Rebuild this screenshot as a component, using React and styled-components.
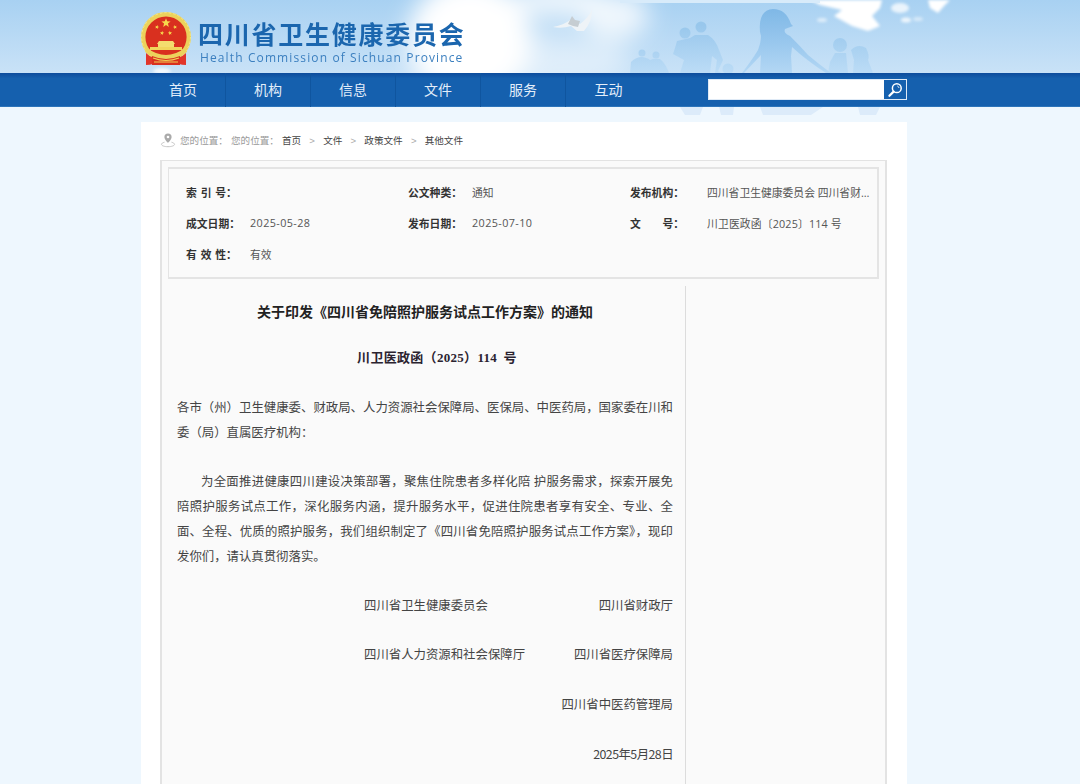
import React from 'react';
import styled, { createGlobalStyle } from 'styled-components';

const GlobalStyle = createGlobalStyle`
  html, body { margin: 0; padding: 0; background: #eef7fe; }
  body { font-family: "Noto Sans CJK SC", "Noto Sans", sans-serif; color: #333; }
`;

const Page = styled.div`
  width: 1080px;
  height: 784px;
  overflow: hidden;
  background: #eef7fe;
`;

const Hero = styled.header`
  position: relative;
  height: 73px;
  background: linear-gradient(180deg, #a8d1f2 0%, #c9e2f7 100%);
`;

const HeroArt = styled.svg`
  position: absolute;
  left: 0;
  top: 0;
`;

const Brand = styled.div`
  position: relative;
  display: flex;
  align-items: flex-start;
  gap: 5px;
  padding: 12px 0 0 141px;
`;

const BrandText = styled.div`
  display: flex;
  flex-direction: column;
  padding-top: 5px;
`;

const BrandName = styled.div`
  font-size: 25px;
  font-weight: 700;
  line-height: 32px;
  letter-spacing: 1.75px;
  color: #1b66ae;
  white-space: nowrap;
`;

const BrandEn = styled.div`
  font-family: "Open Sans", sans-serif;
  font-size: 12px;
  line-height: 14px;
  margin: 2px 0 0 2px;
  letter-spacing: 1.12px;
  color: #3b7fbf;
  white-space: nowrap;
`;

const NavBar = styled.nav`
  position: relative;
  display: flex;
  align-items: center;
  height: 34px;
  padding-left: 141px;
  box-sizing: border-box;
  background: linear-gradient(180deg, #0d4c9c 0%, #1560ae 16%, #1560ae 96%, #3a80c2 100%);
`;

const NavItem = styled.a`
  display: flex;
  align-items: center;
  justify-content: center;
  width: 85px;
  height: 34px;
  padding-bottom: 2px;
  box-sizing: border-box;
  font-size: 14px;
  color: #e3eefa;
  border-right: ${(p) => (p.$last ? 'none' : '1px solid #0f559f')};
`;

const SearchBox = styled.form`
  display: flex;
  width: 199px;
  height: 21px;
  margin: 0 0 1px 57px;
  box-sizing: border-box;
  background: #fff;
  border: 1px solid #dfeaf6;
`;

const SearchInput = styled.input`
  flex: 1;
  min-width: 0;
  border: 0;
  outline: 0;
  padding: 0 4px;
  background: #fff;
`;

const SearchButton = styled.button`
  display: flex;
  align-items: center;
  justify-content: center;
  width: 22px;
  height: 19px;
  padding: 0;
  border: 0;
  background: #1560ae;
`;

const Panel = styled.main`
  position: relative;
  width: 766px;
  margin: 15px 0 0 141px;
  padding: 0 20px 0 19px;
  box-sizing: border-box;
  background: #fff;
`;

const Crumbs = styled.div`
  display: flex;
  align-items: center;
  height: 36px;
  padding-bottom: 2px;
  font-size: 9.6px;
  white-space: nowrap;
`;

const PinIcon = styled.svg`
  margin-right: 4px;
  flex: none;
`;

const CrumbMuted = styled.span`
  color: #999;
  margin-right: 3px;
`;

const CrumbLink = styled.a`
  color: #444;
`;

const CrumbSep = styled.span`
  width: 22px;
  text-align: center;
  color: #aaa;
  font-family: "Liberation Sans", sans-serif;
`;

const Box = styled.section`
  padding: 6px 6px 0;
  background: #fafafa;
  border: 1px solid #e3e3e3;
  border-width: 1px 2px 0;
`;

const MetaBox = styled.div`
  display: grid;
  grid-template-columns: 222px 222px 1fr;
  grid-auto-rows: 31px;
  height: 112px;
  padding: 7px 5px 0 17px;
  box-sizing: border-box;
  border: 2px solid #e4e4e4;
  border-left-width: 1px;
`;

const MetaCell = styled.div`
  display: flex;
  align-items: center;
  min-width: 0;
  font-size: 10.8px;
`;

const MetaLabel = styled.b`
  flex: none;
  width: ${(p) => p.$w}px;
  font-weight: 700;
  word-spacing: 1.4px;
  color: #333;
  white-space: pre;
`;

const MetaValue = styled.span`
  min-width: 0;
  overflow: hidden;
  font-family: "Open Sans", "Noto Sans CJK SC", sans-serif;
  text-overflow: ellipsis;
  white-space: nowrap;
  color: #555;
  letter-spacing: ${(p) => p.$spacing || 0}px;
`;

const Columns = styled.div`
  display: flex;
  margin: 7px 0 0 -7px;
`;

const Article = styled.article`
  width: 525px;
  height: 520px;
  padding: 0 12px 0 16px;
  box-sizing: border-box;
  border-right: 1px solid #dcdcdc;
`;

const Title = styled.h1`
  margin: 0;
  height: 52px;
  font-size: 14px;
  line-height: 50px;
  font-weight: 700;
  text-align: center;
  color: #222;
  white-space: nowrap;
`;

const DocNo = styled.h2`
  margin: 0 0 16.5px;
  height: 40px;
  padding-left: 24px;
  font-family: "Liberation Serif", "Noto Sans CJK SC", serif;
  font-size: 13px;
  line-height: 40px;
  font-weight: 700;
  text-align: center;
  color: #2b2330;
  letter-spacing: 0.3px;
  word-spacing: 3px;
  white-space: pre;
`;

const Para = styled.p`
  margin: 0 0 ${(p) => (p.$indent ? '23.5px' : '24.5px')};
  font-size: 12.4px;
  line-height: 25px;
  text-align: justify;
  color: #444;
  text-indent: ${(p) => (p.$indent ? '24px' : '0')};
`;

const SignRow = styled.div`
  display: flex;
  justify-content: ${(p) => (p.$pair ? 'space-between' : 'flex-end')};
  margin: 0 0 24.8px;
  padding-left: ${(p) => (p.$pair ? '187px' : '0')};
  font-size: 12.4px;
  line-height: 25px;
  color: #444;
  white-space: nowrap;
  letter-spacing: ${(p) => (p.$tight ? '-0.55px' : '0')};
`;

const navItems = ['首页', '机构', '信息', '文件', '服务', '互动'];

const meta = [
  { label: '索 引 号：', w: 64, value: '' },
  { label: '公文种类：', w: 64, value: '通知' },
  { label: '发布机构：', w: 77, value: '四川省卫生健康委员会 四川省财政厅' },
  { label: '成文日期：', w: 64, value: '2025-05-28', spacing: 0.4 },
  { label: '发布日期：', w: 64, value: '2025-07-10', spacing: 0.4 },
  { label: '文　　号：', w: 77, value: '川卫医政函〔2025〕114 号', spacing: 0.15 },
  { label: '有 效 性：', w: 64, value: '有效' },
];

const star = (cx, cy, r, rot = 0) => {
  const pts = [];
  for (let i = 0; i < 10; i += 1) {
    const a = (Math.PI / 5) * i - Math.PI / 2 + rot;
    const d = i % 2 ? r * 0.42 : r;
    pts.push(`${(cx + d * Math.cos(a)).toFixed(2)},${(cy + d * Math.sin(a)).toFixed(2)}`);
  }
  return pts.join(' ');
};

const Scenery = () => (
  <HeroArt width="1080" height="122" viewBox="0 0 1080 122" aria-hidden="true">
    <defs>
      <filter id="soft" x="-40%" y="-40%" width="180%" height="180%">
        <feGaussianBlur stdDeviation="12" />
      </filter>
      <filter id="soft2" x="-30%" y="-30%" width="160%" height="160%">
        <feGaussianBlur stdDeviation="1.8" />
      </filter>
      <filter id="edge" x="-10%" y="-10%" width="120%" height="120%">
        <feGaussianBlur stdDeviation="0.6" />
      </filter>
      <linearGradient id="figure" gradientUnits="userSpaceOnUse" x1="0" y1="9" x2="0" y2="73">
        <stop offset="0" stopColor="#7fb8e6" />
        <stop offset="0.55" stopColor="#9ac8ee" />
        <stop offset="1" stopColor="#b3d7f4" />
      </linearGradient>
      <linearGradient id="side" gradientUnits="userSpaceOnUse" x1="0" y1="25" x2="0" y2="73">
        <stop offset="0" stopColor="#98c7ec" />
        <stop offset="1" stopColor="#bcdcf6" />
      </linearGradient>
      <clipPath id="sky"><rect width="1080" height="73" /></clipPath>
    </defs>
    <g clipPath="url(#sky)">
      <g filter="url(#soft)" fill="#fff">
        <ellipse cx="470" cy="40" rx="62" ry="62" />
        <ellipse cx="550" cy="60" rx="80" ry="26" opacity="0.45" />
        <ellipse cx="560" cy="0" rx="46" ry="18" opacity="0.8" />
        <ellipse cx="615" cy="16" rx="34" ry="24" opacity="0.8" />
      </g>
      <g filter="url(#soft2)" fill="#fff">
        <ellipse cx="162" cy="71" rx="9" ry="3" opacity="0.8" />
        <path d="M810 0 L882 0 L880 8 L872 16 L880 26 L868 31 L852 26 L834 16 L842 10 L820 5Z" />
        <ellipse cx="900" cy="8" rx="9" ry="5" opacity="0.75" />
        <ellipse cx="906" cy="20" rx="5" ry="2.5" opacity="0.8" />
        <ellipse cx="918" cy="19" rx="5" ry="2" opacity="0.5" />
        <ellipse cx="822" cy="20" rx="5" ry="2" opacity="0.6" />
        <path d="M928 0 L950 0 L944 6 L938 13 L930 8Z" />
      </g>
      <rect x="620" y="0" width="200" height="3" fill="#d8ebfa" />
      <g filter="url(#edge)">
        <path d="M553 27 Q564 25 570 20 L580 24 Q588 18 592 10 Q592 22 584 31 L577 31 L571 26 Q562 29 553 27Z" fill="#eef3f7" />
        <path d="M568 24 L572 16 L575 20 L580 21 L578 27 L573 26Z" fill="#c6cdd2" />
      </g>
      <g fill="url(#side)" filter="url(#edge)">
        <circle cx="642" cy="53" r="3.5" />
        <circle cx="656" cy="55" r="3.5" />
        <path d="M630 73 L631 62 Q636 57 642 57 Q648 58 650 60 Q654 58 660 59 Q666 64 669 73Z" />
        <circle cx="840" cy="45" r="7" />
        <path d="M828 73 L830 62 L835 53 L846 53 L848 73Z" />
        <path d="M851 50 Q858 43 866 48 Q870 56 868 60 L873 73 L853 73 L854 60 Z" />
        <circle cx="685" cy="33" r="5.5" />
        <circle cx="701" cy="27" r="5.5" />
        <path d="M677 41 L690 38 L695 35 L708 35 Q716 40 719 50 L723 60 L718 71 L721 73 L715 73 L717 60 L712 56 L710 73 L680 73 L684 60 L673 54 L675 48Z" />
        <circle cx="728" cy="69" r="5.5" />
      </g>
      <path
        filter="url(#edge)"
        fill="url(#figure)"
        d="M760 32 Q758 10 773 9 Q786 9 791 24 L793 26 L785 29 Q783 33 790 36 Q800 46 808 55 Q820 65 831 73 L826 73 Q806 60 792 47 L791 56 L792 73 L760 73 L761 55 L744 73 L742 73 Q752 60 758 50 Q761 42 761 36Z"
      />
    </g>
    <g fill="#dcebfa">
      <path d="M680 107h23l-3 8h-15z" />
      <path d="M719 107h15l-1 8h-12z" />
      <path d="M760 107h63l-12 8h-48z" />
      <path d="M858 107h22l-4 8h-16z" />
    </g>
  </HeroArt>
);

const Emblem = () => (
  <svg width="52" height="56" viewBox="0 0 52 56" aria-hidden="true">
    <circle cx="25" cy="25" r="22.8" fill="#d9301f" stroke="#ecd25c" strokeWidth="4.4" />
    <circle cx="25" cy="25" r="24.4" fill="none" stroke="#f6e888" strokeWidth="1" strokeDasharray="2.5 2" />
    <polygon points={star(25, 11, 4.8)} fill="#f7d94c" />
    <polygon points={star(16, 15, 2.2, 0.3)} fill="#f7d94c" />
    <polygon points={star(21, 21, 2.2, 0.15)} fill="#f7d94c" />
    <polygon points={star(29, 21, 2.2, -0.15)} fill="#f7d94c" />
    <polygon points={star(34, 15, 2.2, -0.3)} fill="#f7d94c" />
    <path d="M18 29 L32 29 L34 32 L16 32Z" fill="#f4dd6e" />
    <rect x="17" y="32" width="16" height="3" fill="#f4dd6e" />
    <path d="M9 35h32v3H9z" fill="#f1d55c" />
    <path d="M6 36 Q25 50 44 36 L46 40 Q25 55 4 40Z" fill="#ecd25c" />
    <path d="M5 41 Q8 44 11 45 L12 52 Q9 53 5 53Z" fill="#e2352a" />
    <path d="M45 41 Q42 44 39 45 L38 52 Q41 53 45 53Z" fill="#e2352a" />
    <path d="M11 44 Q25 50 39 44 L39 53 L11 53Z" fill="#d9301f" />
    <path d="M12 46 Q25 51 38 46 M13 50 H37" stroke="#f1cf55" strokeWidth="1.2" fill="none" />
  </svg>
);

const App = () => (
  <>
    <GlobalStyle />
    <Page>
      <Hero>
        <Scenery />
        <Brand>
          <Emblem />
          <BrandText>
            <BrandName>四川省卫生健康委员会</BrandName>
            <BrandEn>Health Commission of Sichuan Province</BrandEn>
          </BrandText>
        </Brand>
      </Hero>
      <NavBar>
        {navItems.map((item, i) => (
          <NavItem key={item} $last={i === navItems.length - 1}>{item}</NavItem>
        ))}
        <SearchBox onSubmit={(e) => e.preventDefault()}>
          <SearchInput />
          <SearchButton type="button" aria-label="搜索">
            <svg width="16" height="16" viewBox="0 0 16 16" fill="none">
              <circle cx="9.8" cy="6.2" r="4.4" stroke="#fff" strokeWidth="1.5" />
              <path d="M6.6 9.6 L2.4 13.8" stroke="#fff" strokeWidth="2.2" strokeLinecap="round" />
              <path d="M10.2 3.9 Q11.8 4.4 12 6" stroke="#fff" strokeWidth="0.8" />
            </svg>
          </SearchButton>
        </SearchBox>
      </NavBar>
      <Panel>
        <Crumbs>
          <PinIcon width="16" height="16" viewBox="0 0 16 16" fill="none">
            <path d="M8 1.5a3.6 3.6 0 0 0-3.6 3.6C4.4 7.8 8 11 8 11s3.6-3.2 3.6-5.9A3.6 3.6 0 0 0 8 1.5z" fill="#aaa" />
            <circle cx="8" cy="5" r="1.3" fill="#fff" />
            <path d="M4.5 10.2C2.6 10.7 1.5 11.5 1.5 12.4c0 1.3 2.9 2.3 6.5 2.3s6.5-1 6.5-2.3c0-.9-1.1-1.7-3-2.2" stroke="#c4c4c4" strokeWidth="1" />
          </PinIcon>
          <CrumbMuted>您的位置：</CrumbMuted>
          <CrumbMuted>您的位置：</CrumbMuted>
          <CrumbLink>首页</CrumbLink>
          <CrumbSep>&gt;</CrumbSep>
          <CrumbLink>文件</CrumbLink>
          <CrumbSep>&gt;</CrumbSep>
          <CrumbLink>政策文件</CrumbLink>
          <CrumbSep>&gt;</CrumbSep>
          <CrumbLink>其他文件</CrumbLink>
        </Crumbs>
        <Box>
          <MetaBox>
            {meta.map((m) => (
              <MetaCell key={m.label}>
                <MetaLabel $w={m.w}>{m.label}</MetaLabel>
                <MetaValue $spacing={m.spacing}>{m.value}</MetaValue>
              </MetaCell>
            ))}
          </MetaBox>
          <Columns>
            <Article>
              <Title>关于印发《四川省免陪照护服务试点工作方案》的通知</Title>
              <DocNo>川卫医政函（2025）114 号</DocNo>
              <Para>各市（州）卫生健康委、财政局、人力资源社会保障局、医保局、中医药局，国家委在川和委（局）直属医疗机构：</Para>
              <Para $indent>为全面推进健康四川建设决策部署，聚焦住院患者多样化陪 护服务需求，探索开展免陪照护服务试点工作，深化服务内涵，提升服务水平，促进住院患者享有安全、专业、全面、全程、优质的照护服务，我们组织制定了《四川省免陪照护服务试点工作方案》，现印发你们，请认真贯彻落实。</Para>
              <SignRow $pair><span>四川省卫生健康委员会</span><span>四川省财政厅</span></SignRow>
              <SignRow $pair><span>四川省人力资源和社会保障厅</span><span>四川省医疗保障局</span></SignRow>
              <SignRow>四川省中医药管理局</SignRow>
              <SignRow $tight>2025年5月28日</SignRow>
            </Article>
          </Columns>
        </Box>
      </Panel>
    </Page>
  </>
);

export default App;
